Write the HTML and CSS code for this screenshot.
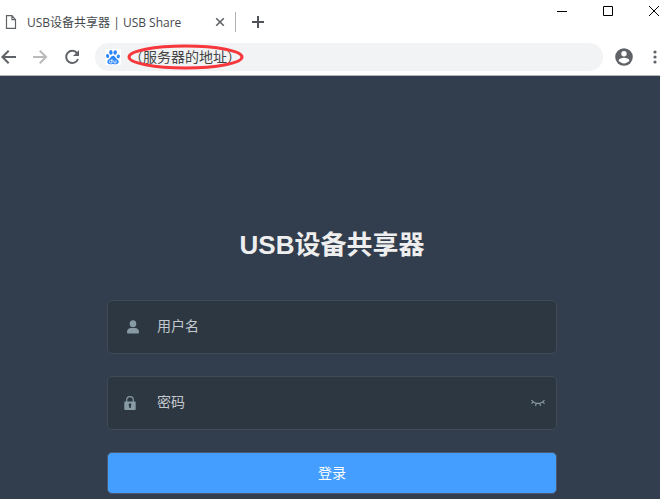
FILE: index.html
```html
<!DOCTYPE html>
<html lang="zh-CN">
<head>
    <meta charset="UTF-8">
    <meta name="viewport" content="width=device-width, initial-scale=1.0">
    <title>USB设备共享器 | USB Share</title>
    <link rel="stylesheet" href="styles.css">
</head>
<body>
    <header class="browser">
        <div class="tab-strip">
            <div class="tab">
                <svg class="tab-icon" width="12" height="14" viewBox="0 0 12 14" fill="none" stroke="#5f6368" stroke-width="1.2">
                    <path d="M1.500 .7h5.500l3.500 4v8.600h-9zM7 .7v4h3.500"/>
                </svg>
                <span class="tab-title">USB设备共享器 | USB Share</span>
                <button class="icon-button" type="button" aria-label="关闭标签页">
                    <svg width="10" height="10" viewBox="0 0 10 10" stroke="#5f6368" stroke-width="1.6"><path d="M1.2 1.2l7.6 7.6M8.8 1.2L1.2 8.8"/></svg>
                </button>
            </div>
            <button class="icon-button new-tab" type="button" aria-label="新标签页">
                <svg width="14" height="14" viewBox="0 0 14 14" stroke="#50545a" stroke-width="2"><path d="M7 1v12M1 7h12"/></svg>
            </button>
            <div class="window-controls">
                <button class="icon-button" type="button" aria-label="最小化">
                    <svg width="10" height="10" viewBox="0 0 10 10" stroke="#000"><path d="M0 5.5h10"/></svg>
                </button>
                <button class="icon-button" type="button" aria-label="最大化">
                    <svg width="10" height="10" viewBox="0 0 10 10" fill="none" stroke="#000"><path d="M.5.5h9v9h-9z"/></svg>
                </button>
                <button class="icon-button" type="button" aria-label="关闭">
                    <svg width="10" height="10" viewBox="0 0 10 10" stroke="#000"><path d="M0 0l10 10M10 0L0 10"/></svg>
                </button>
            </div>
        </div>
        <div class="toolbar">
            <div class="nav-buttons">
                <button class="icon-button" type="button" aria-label="后退">
                    <svg width="16" height="16" viewBox="0 0 16 16" fill="none" stroke="#5f6368" stroke-width="2"><path d="M16 8H2.5M8.7 1.7L2.4 8l6.3 6.3"/></svg>
                </button>
                <button class="icon-button" type="button" aria-label="前进">
                    <svg width="16" height="16" viewBox="0 0 16 16" fill="none" stroke="#bababa" stroke-width="2"><path d="M1 8h13M7.800 1.700L14.100 8l-6.300 6.300"/></svg>
                </button>
                <button class="icon-button" type="button" aria-label="刷新">
                    <svg width="16" height="16" viewBox="0 0 16 16"><path d="M13.1 4.2A6.1 6.1 0 1 0 14 10" fill="none" stroke="#5f6368" stroke-width="2"/><path d="M15 1v6H9z" fill="#5f6368"/></svg>
                </button>
            </div>
            <div class="address">
                <svg class="site-icon" width="16" height="16" viewBox="0 0 16 16">
                    <path fill="#fff" d="M0 0h16v16H0z"/>
                    <g fill="#2b86fb">
                        <ellipse cx="5.9" cy="3.4" rx="1.7" ry="2.4"/>
                        <ellipse cx="10.2" cy="3.5" rx="1.7" ry="2.3" transform="rotate(10 10.2 3.5)"/>
                        <ellipse cx="2.6" cy="7" rx="1.6" ry="2" transform="rotate(-12 2.6 7)"/>
                        <ellipse cx="13.3" cy="7.4" rx="1.6" ry="2" transform="rotate(12 13.3 7.4)"/>
                        <path d="M8 6.8c-1.8 0-2.1 1.6-3.2 2.6C3.6 10.4 2.3 11 2.3 12.8c0 1.6 1.1 2.500 2.700 2.500 1 0 1.900-.3 3-.3s2 .3 3 .3c1.600 0 2.700-.9 2.700-2.500 0-1.800-1.300-2.400-2.500-3.400C10.100 8.400 9.800 6.800 8 6.800z"/>
                    </g>
                    <path d="M7 9.900v4H5.600a1.200 1.200 0 0 1 0-2.500H7M8.800 11.300v1.800c0 .6.300.9.900.9H11v-2.700" fill="none" stroke="#fff" stroke-width=".8"/>
                </svg>
                <input class="address-input" type="text" aria-label="地址" value="（服务器的地址）">
                <svg class="address-mark" width="117" height="26" viewBox="0 0 117 26" fill="none" stroke="#f7373b" stroke-width="3">
                    <ellipse cx="58.5" cy="13" rx="56.5" ry="11"/>
                </svg>
            </div>
            <button class="icon-button" type="button" aria-label="用户">
                <svg width="18" height="18" viewBox="0 0 18 18"><circle cx="9" cy="9" r="8.8" fill="#5f6368"/><circle cx="9" cy="5.7" r="2.7" fill="#fff"/><path d="M3.6 12.5c0-1.8 3.6-2.8 5.4-2.8s5.4 1 5.4 2.8C13.2 14.3 11.2 15.4 9 15.4s-4.2-1.1-5.4-2.9z" fill="#fff"/></svg>
            </button>
            <button class="icon-button menu-button" type="button" aria-label="菜单">
                <svg width="4" height="14" viewBox="0 0 4 14" fill="#5f6368"><circle cx="2" cy="2" r="1.6"/><circle cx="2" cy="7" r="1.6"/><circle cx="2" cy="12" r="1.6"/></svg>
            </button>
        </div>
    </header>

    <main class="login">
        <form class="login-form">
            <h1 class="title">USB设备共享器</h1>
            <div class="field">
                <label class="field-icon" for="username" aria-label="用户名">
                    <svg width="14" height="14" viewBox="0 0 14 14" fill="#889aa4"><ellipse cx="7" cy="3.7" rx="3.3" ry="3.5"/><path d="M1 12.2C1 9.4 3 8 5 8h4c2 0 4 1.4 4 4.2 0 .8-.4 1.3-1.2 1.3H2.2C1.4 13.5 1 13 1 12.2z"/></svg>
                </label>
                <input class="field-input" id="username" type="text" placeholder="用户名">
            </div>
            <div class="field">
                <label class="field-icon password-icon" for="password" aria-label="密码">
                    <svg width="14" height="14" viewBox="0 0 14 14"><path d="M3.7 6V3.9a3.3 3.3 0 0 1 6.600 0V6" fill="none" stroke="#889aa4" stroke-width="1.2"/><path fill="#889aa4" fill-rule="evenodd" d="M2.300 5.500h9.400c.6 0 1 .4 1 1V13c0 .6-.4 1-1 1H2.300c-.6 0-1-.4-1-1V6.500c0-.6.4-1 1-1zM6.200 12h1.600v-2a1.400 1.400 0 1 0-1.600 0z"/></svg>
                </label>
                <input class="field-input" id="password" type="password" placeholder="密码">
                <button class="icon-button" type="button" aria-label="显示密码">
                    <svg width="14" height="8" viewBox="0 0 14 8" fill="none" stroke="#889aa4" stroke-width="1.2"><path d="M.5 1C3.500 5.500 10.500 5.500 13.500 1M2.200 2.900L.5 4.600M5.200 4.400l-.7 2.500M8.800 4.400l.7 2.500M11.800 2.900l1.700 1.700"/></svg>
                </button>
            </div>
            <button class="submit" type="submit">登录</button>
        </form>
    </main>
</body>
</html>
```

FILE: styles.css
```css
* {
    box-sizing: border-box;
}

body {
    display: flex;
    flex-direction: column;
    min-height: 100vh;
    margin: 0;
    background-color: #323d4d;
    font-family: "Open Sans", "Noto Sans CJK SC", sans-serif;
    font-size: 14px;
}

button, input {
    font: inherit;
    border: none;
    padding: 0;
    background: transparent;
}

svg {
    display: block;
    flex: none;
}

.icon-button {
    flex: none;
    cursor: pointer;
}

.browser {
    background-color: #fff;
    border-bottom: 1px solid #b6b6b6;
}

.tab-strip {
    display: flex;
    align-items: center;
    height: 43px;
    padding: 1px 1px 0 5px;
}

.tab {
    display: flex;
    align-items: center;
    width: 231px;
    height: 20px;
    padding-right: 10px;
    border-right: 1px solid #b0b2b5;
}

.tab-title {
    flex: 1;
    margin-left: 10px;
    font-size: 12px;
    white-space: nowrap;
    color: #45494d;
}

.new-tab {
    margin-left: 15px;
}

.window-controls {
    display: flex;
    align-self: flex-start;
    gap: 36px;
    margin-left: auto;
    padding-top: 5px;
}

.toolbar {
    display: flex;
    align-items: center;
    gap: 12px;
    padding: 0 3px 4px 0;
}

.nav-buttons {
    display: flex;
    gap: 16px;
    padding-right: 3px;
}

.address {
    position: relative;
    display: flex;
    align-items: center;
    flex: 1;
    min-width: 0;
    height: 28px;
    padding: 0 10px;
    border-radius: 14px;
    background-color: #f1f3f4;
}

.address-input {
    flex: 1;
    min-width: 0;
    margin-left: 8px;
    padding-bottom: 2px;
    outline: none;
    color: #444;
}

/* red ring around the address */
.address-mark {
    position: absolute;
    top: 1px;
    left: 32px;
    pointer-events: none;
}

.menu-button {
    margin-left: 8px;
}

.login {
    flex: 1;
    padding: 150px 0 6px 4px;
}

.login-form {
    max-width: 450px;
    margin: 0 auto;
}

.title {
    margin: 0 0 36px;
    font-family: "Liberation Sans", "Noto Sans CJK SC", sans-serif;
    font-size: 26px;
    line-height: 38px;
    text-align: center;
    color: #eee;
}

.field {
    display: flex;
    align-items: center;
    height: 54px;
    margin-bottom: 22px;
    padding: 0 11px 0 18px;
    border: 1px solid #404b58;
    border-radius: 5px;
    background-color: #2c3742;
}

.field-icon {
    width: 31px;
}

.password-icon {
    margin-left: -3px;
    width: 34px;
}

.field-input {
    flex: 1;
    min-width: 0;
    height: 47px;
    padding-bottom: 4px;
    outline: none;
    color: #fff;
}

.field-input::placeholder {
    color: #c3c8cd;
}

.submit {
    width: 100%;
    height: 42px;
    padding-bottom: 2px;
    border: 1px solid #4b5a70;
    border-radius: 5px;
    background-color: #439eff;
    color: #fff;
    cursor: pointer;
}
```
